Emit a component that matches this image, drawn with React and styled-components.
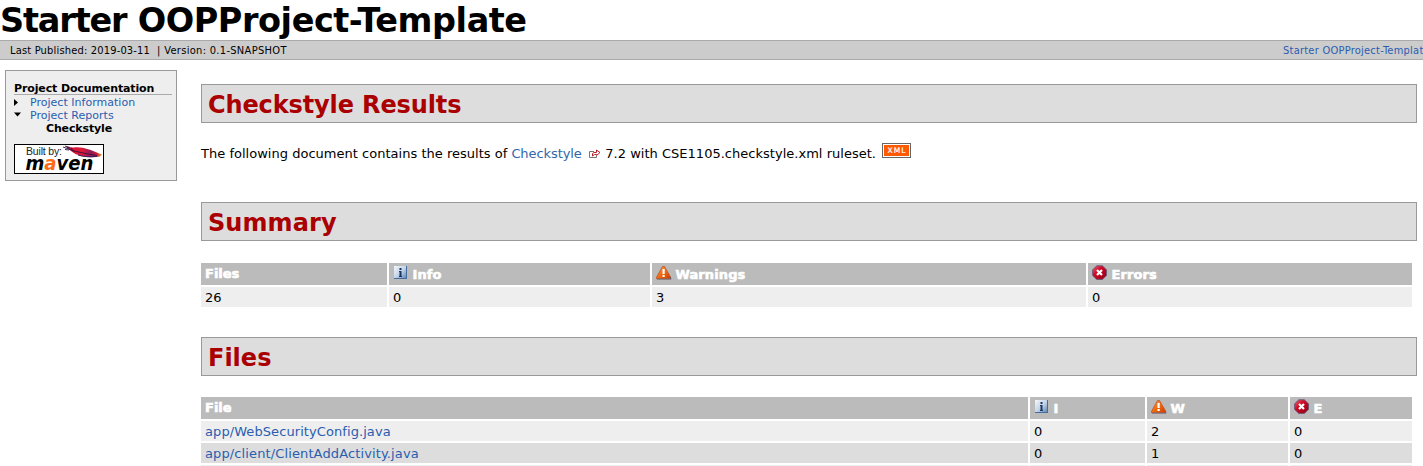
import React from 'react';
import styled, { createGlobalStyle } from 'styled-components';

const Global = createGlobalStyle`
  html, body { margin: 0; padding: 0; background: #fff; overflow: hidden; }
  body { font: 13px/16px Verdana, "DejaVu Sans", sans-serif; color: #000; }
  a { text-decoration: none; }
`;

const Page = styled.div`
  height: 466px;
  overflow: hidden;
  display: flex;
  flex-direction: column;
`;

const Banner = styled.h1`
  margin: 0;
  height: 40px;
  flex: none;
  font-size: 33.5px;
  line-height: 42px;
  letter-spacing: -0.45px;
  white-space: nowrap;
`;

const BannerLead = styled.span`
  letter-spacing: -1.15px;
`;

const Breadcrumbs = styled.div`
  box-sizing: border-box;
  height: 20px;
  flex: none;
  display: flex;
  justify-content: space-between;
  padding-left: 10px;
  border: solid #aaa;
  border-width: 1px 0;
  background: #ccc;
  font: 11px/19px "DejaVu Sans Condensed", "DejaVu Sans", sans-serif;
  font-stretch: condensed;
  letter-spacing: 0.18px;
  white-space: nowrap;
`;

const Published = styled.div`
  display: flex;
  gap: 7px;
`;

const Version = styled.span`
  letter-spacing: 0.31px;
`;

const HomeLink = styled.a`
  width: 140px;
  overflow: hidden;
  color: #2a5db0;
  letter-spacing: 0.24px;
`;

const Body = styled.div`
  display: flex;
  align-items: flex-start;
`;

const Sidebar = styled.nav`
  box-sizing: border-box;
  width: 172px;
  height: 111px;
  margin: 10px 24px 0 5px;
  padding: 11px 4px 0 8px;
  flex: none;
  border: 1px solid #999;
  background: #eee;
  font-size: 11px;
  line-height: 13px;
`;

const NavTitle = styled.h5`
  margin: 0 0 1px;
  height: 12px;
  border-bottom: 1px solid #aaa;
  font-size: 11px;
  line-height: 13px;
  letter-spacing: -0.12px;
`;

const NavItem = styled.a`
  display: flex;
  align-items: center;
  height: 13px;
  color: #2a5db0;
  letter-spacing: 0.02px;
`;

const NavArrow = styled.svg`
  width: 16px;
  height: 13px;
  flex: none;
`;

const NavCurrent = styled.strong`
  display: block;
  padding-left: 32px;
  letter-spacing: -0.14px;
`;

const MavenBadge = styled.svg`
  display: block;
  width: 90px;
  height: 30px;
  margin-top: 9px;
`;

const Content = styled.main`
  flex: 1;
  padding: 24px 6px 0 0;
`;

const SectionTitle = styled.h2`
  box-sizing: border-box;
  height: 39px;
  margin: 0;
  padding-left: 6px;
  border: 1px solid #999;
  background: #ddd;
  color: #a00;
  font-size: 24px;
  line-height: 41px;
  letter-spacing: ${(p) => p.$tracking || 0}px;
`;

const Intro = styled.p`
  display: flex;
  align-items: center;
  height: 16px;
  margin: 23px 0 40px;
  white-space: nowrap;
  letter-spacing: 0.02px;
`;

const CheckstyleLink = styled.a`
  display: flex;
  align-items: center;
  margin: 0 4.5px 0 4px;
  color: #36a;
  letter-spacing: -0.08px;
`;

const ExternalIcon = styled.svg`
  width: 12px;
  height: 10px;
  margin-left: 7px;
`;

const XmlBadge = styled.svg`
  width: 29px;
  height: 15px;
  margin: -7px 0 0 5.5px;
`;

const Table = styled.div`
  display: grid;
  grid-template-columns: ${(p) => p.$columns};
  gap: 2px;
  width: 1211px;
  margin: ${(p) => p.$margin};
`;

const HeadCell = styled.div`
  display: flex;
  align-items: flex-start;
  height: 22px;
  padding-left: 4px;
  background: #bbb;
  color: #fff;
  font-weight: 700;
  line-height: 22px;
  -webkit-text-stroke: 0.6px #fff;
`;

const HeadLabel = styled.span`
  padding: 1px 0 0 3.5px;
  letter-spacing: 0.1px;
`;

const Cell = styled.div`
  height: 20px;
  padding-left: 4px;
  background: ${(p) => (p.$shade ? '#ddd' : '#eee')};
  line-height: 22px;
`;

const FileLink = styled.a`
  color: #2a5db0;
  letter-spacing: ${(p) => p.$tracking}px;
`;

const StatusIcon = styled.svg`
  width: 16px;
  height: 16px;
  flex: none;
  margin-top: 2px;
`;

function InfoIcon() {
  return (
    <StatusIcon viewBox="0 0 16 16">
      <defs>
        <linearGradient id="infoFill" x1="0" y1="0" x2="1" y2="1">
          <stop offset="0" stopColor="#f4f8fc" />
          <stop offset=".5" stopColor="#c3d4e8" />
          <stop offset="1" stopColor="#5079ac" />
        </linearGradient>
      </defs>
      <rect x="1" y="1" width="13" height="13" fill="url(#infoFill)" />
      <path d="M1 13.500H13.500V1" fill="none" stroke="#456c9f" />
      <path d="M6.500 3h2v2h-2zM6 6h2.500v5H9v1H6v-1h.5V7H6z" fill="#1c355c" />
    </StatusIcon>
  );
}

function WarningIcon() {
  return (
    <StatusIcon viewBox="0 0 16 16">
      <defs>
        <linearGradient id="warnFill" x1="0" y1="0" x2="1" y2="1">
          <stop offset="0" stopColor="#ff9d50" />
          <stop offset=".5" stopColor="#f06a10" />
          <stop offset="1" stopColor="#c83c00" />
        </linearGradient>
      </defs>
      <path d="M6.500 1.500h2L14.700 12.200v1.500H.5v-1.400z" fill="url(#warnFill)" stroke="#b94a1c" strokeWidth=".7" />
      <path d="M1 14.200h14L14.300 12" fill="none" stroke="#62647c" strokeWidth=".8" />
      <path d="M6.500 4h2.200v5H6.500zM6.500 10h2.200v2H6.500z" fill="#fff" />
    </StatusIcon>
  );
}

function ErrorIcon() {
  return (
    <StatusIcon viewBox="0 0 16 16">
      <defs>
        <linearGradient id="errFill" x1="0" y1="0" x2="1" y2="1">
          <stop offset="0" stopColor="#e76678" />
          <stop offset=".4" stopColor="#cf0925" />
          <stop offset="1" stopColor="#8c0016" />
        </linearGradient>
      </defs>
      <path d="M4.800.8h5.500l4.200 4v5.600l-4.200 4H4.800l-4.200-4V4.800z" fill="url(#errFill)" stroke="#67557c" strokeWidth=".9" />
      <path d="M5 5l5 5M10 5l-5 5" stroke="#fff" strokeWidth="2.200" />
    </StatusIcon>
  );
}

function MavenLogo() {
  return (
    <MavenBadge viewBox="0 0 90 30">
      <defs>
        <linearGradient id="feather" x1="0" x2="1">
          <stop offset="0" stopColor="#50205c" />
          <stop offset=".15" stopColor="#d4143c" />
          <stop offset=".45" stopColor="#e01836" />
          <stop offset=".7" stopColor="#8c1b60" />
          <stop offset=".86" stopColor="#d81832" />
          <stop offset="1" stopColor="#d0b044" />
        </linearGradient>
      </defs>
      <rect x=".5" y=".5" width="89" height="29" fill="#fff" stroke="#000" />
      <text x="11.500" y="26" fontFamily="DejaVu Sans, sans-serif" fontSize="20" fontWeight="700" fontStyle="italic" textLength="68" lengthAdjust="spacingAndGlyphs">
        m<tspan fill="#ff6a13">a</tspan>ven
      </text>
      <path d="M52 3c3 0 5 .6 8 .4 9-1 17 2.600 24 5.600l4 1.400-2 2.200c-9 1.800-22 .2-28-4.800z" fill="url(#feather)" />
      <path d="M49 3l11 4 14 3 9 1.500M57 4l3 4M51 2l5 1.500M51 5.500l4 .5" fill="none" stroke="#30123c" strokeWidth=".9" />
      <path d="M64 11c5 1.500 12 2.300 19 1.300" fill="none" stroke="#30215e" />
      <text x="12" y="11" fontFamily="Liberation Sans, Arial, sans-serif" fontSize="10.500" textLength="36" fill="#222">Built by:</text>
    </MavenBadge>
  );
}

const severities = [
  { Icon: InfoIcon, name: 'Info', short: 'I', count: 0 },
  { Icon: WarningIcon, name: 'Warnings', short: 'W', count: 3 },
  { Icon: ErrorIcon, name: 'Errors', short: 'E', count: 0 },
];

const files = [
  { path: 'app/WebSecurityConfig.java', counts: [0, 2, 0], tracking: 0.08 },
  { path: 'app/client/ClientAddActivity.java', counts: [0, 1, 0], tracking: 0.12 },
];

export default function App() {
  return (
    <Page>
      <Global />
      <Banner><BannerLead>Starter</BannerLead> OOPProject-Template</Banner>
      <Breadcrumbs>
        <Published>
          <span>Last Published: 2019-03-11</span>
          <Version>| Version: 0.1-SNAPSHOT</Version>
        </Published>
        <HomeLink>Starter OOPProject-Template</HomeLink>
      </Breadcrumbs>
      <Body>
        <Sidebar>
          <NavTitle>Project Documentation</NavTitle>
          <NavItem>
            <NavArrow viewBox="0 0 16 13"><path d="M0 3v7l4-3.500z" /></NavArrow>
            Project Information
          </NavItem>
          <NavItem>
            <NavArrow viewBox="0 0 16 13"><path d="M0 3.500h7L3.500 7.500z" /></NavArrow>
            Project Reports
          </NavItem>
          <NavCurrent>Checkstyle</NavCurrent>
          <MavenLogo />
        </Sidebar>
        <Content>
          <SectionTitle $tracking={-0.12}>Checkstyle Results</SectionTitle>
          <Intro>
            The following document contains the results of
            <CheckstyleLink>
              Checkstyle
              <ExternalIcon viewBox="0 0 12 10">
                <path d="M5 2.500H.5v6h7V7" fill="#fff" stroke="#777" />
                <path d="M3.500 7V4.500L5 3.500h2.500V1L11 3.500 7.500 6.500v-1H5.500z" fill="#fff" stroke="#b5202a" />
              </ExternalIcon>
            </CheckstyleLink>
            7.2 with CSE1105.checkstyle.xml ruleset.
            <XmlBadge viewBox="0 0 29 15">
              <rect x=".5" y=".5" width="28" height="14" fill="#fff" stroke="#666" />
              <rect x="2" y="2" width="25" height="11" fill="#ff5a00" />
              <text x="5.500" y="10" fontFamily="DejaVu Sans, sans-serif" fontSize="7.500" textLength="18" fill="#fff" stroke="#fff" strokeWidth=".2">XML</text>
            </XmlBadge>
          </Intro>
          <SectionTitle $tracking={0.08}>Summary</SectionTitle>
          <Table $columns="186px 261px 434px 324px" $margin="22px 0 30px">
            <HeadCell>Files</HeadCell>
            {severities.map(({ Icon, name }) => (
              <HeadCell key={name}><Icon /><HeadLabel>{name}</HeadLabel></HeadCell>
            ))}
            <Cell>26</Cell>
            {severities.map(({ name, count }) => <Cell key={name}>{count}</Cell>)}
          </Table>
          <SectionTitle>Files</SectionTitle>
          <Table $columns="827px 115px 141px 122px" $margin="21px 0 0">
            <HeadCell>File</HeadCell>
            {severities.map(({ Icon, short }) => (
              <HeadCell key={short}><Icon /><HeadLabel>{short}</HeadLabel></HeadCell>
            ))}
            {files.map(({ path, counts, tracking }, row) => (
              <React.Fragment key={path}>
                <Cell $shade={row % 2}><FileLink $tracking={tracking}>{path}</FileLink></Cell>
                {counts.map((n, i) => <Cell key={i} $shade={row % 2}>{n}</Cell>)}
              </React.Fragment>
            ))}
            {[0, 1, 2, 3].map((i) => <Cell key={i} />)}
          </Table>
        </Content>
      </Body>
    </Page>
  );
}
